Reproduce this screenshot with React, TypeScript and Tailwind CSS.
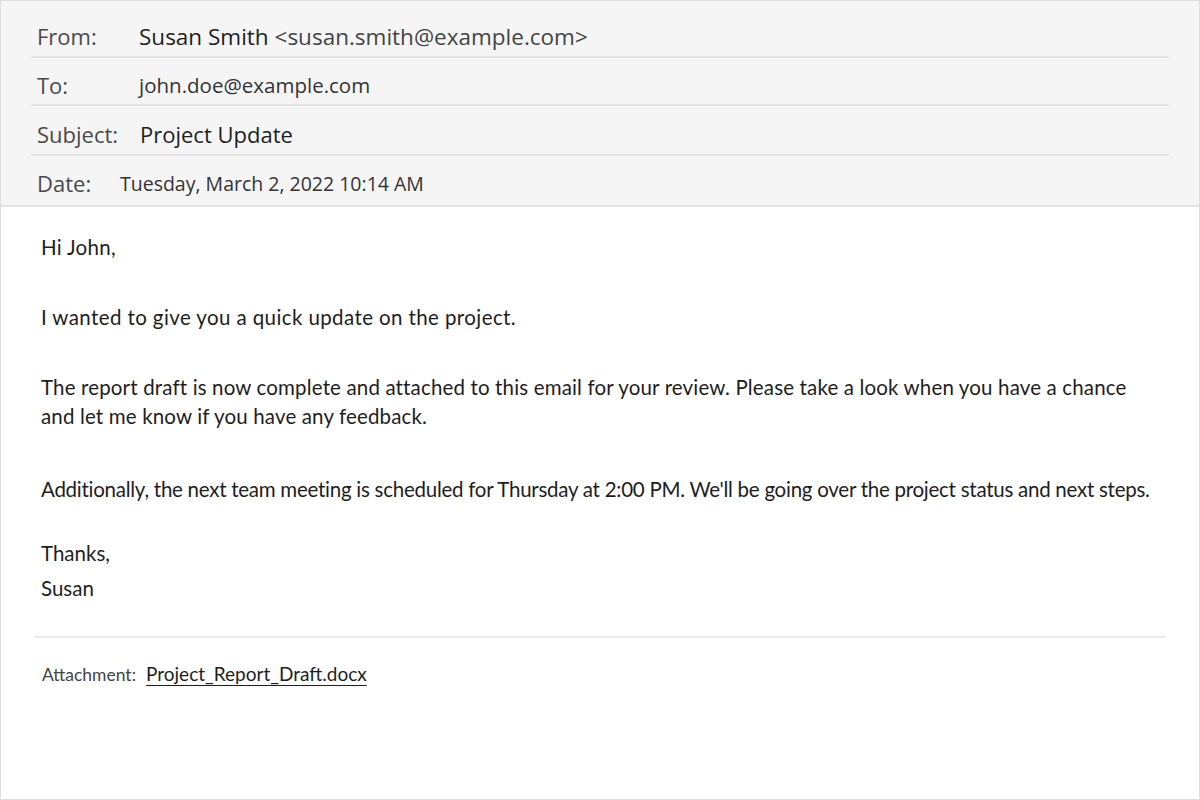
export default function App() {
  return (
    <div className="h-[800px] w-[1200px] overflow-hidden border border-[#dedede] bg-white font-['Open_Sans',sans-serif]">
      <div className="border-b-2 border-[#e2e2e2] bg-[#f5f5f5] pt-[8px]">
        <div className="mx-[30px] flex h-[49px] items-center border-b-2 border-[#e4e4e4] pt-[8px]">
          <span className="w-[108px] pl-[6px] text-[22px] text-[#4a4a4a]">From:</span>
          <span className="text-[22.5px] text-[#1f1f1f]">
            Susan Smith <span className="text-[#444]">&lt;susan.smith@example.com&gt;</span>
          </span>
        </div>
        <div className="mx-[30px] flex h-[48px] items-center border-b-2 border-[#e4e4e4] pt-[8px]">
          <span className="w-[108px] pl-[6px] text-[22px] text-[#4a4a4a]">To:</span>
          <span className="text-[20.5px] text-[#333]">john.doe@example.com</span>
        </div>
        <div className="mx-[30px] flex h-[50px] items-center border-b-2 border-[#e4e4e4] pt-[8px]">
          <span className="w-[109px] pl-[6px] text-[22px] text-[#4a4a4a]">Subject:</span>
          <span className="text-[22px] text-[#1f1f1f]">Project Update</span>
        </div>
        <div className="mx-[30px] flex h-[49px] items-center pt-[6px]">
          <span className="w-[89px] pl-[6px] text-[22px] text-[#4a4a4a]">Date:</span>
          <span className="text-[19.5px] text-[#333]">Tuesday, March 2, 2022 10:14 AM</span>
        </div>
      </div>

      <div className="px-[40px] pt-[26px] font-['Lato',sans-serif] text-[20.5px] leading-[29px] text-[#1e1e1e]">
        <p className="tracking-[0.3px]">Hi John,</p>
        <p className="mt-[41px] tracking-[0.4px]">I wanted to give you a quick update on the project.</p>
        <p className="mt-[41px] whitespace-nowrap tracking-[0.15px]">
          The report draft is now complete and attached to this email for your review. Please take a look when you have a chance
          <br />
          and let me know if you have any feedback.
        </p>
        <p className="mt-[44px] whitespace-nowrap tracking-[-0.26px]">
          Additionally, the next team meeting is scheduled for Thursday at 2:00 PM. We'll be going over the project status and next steps.
        </p>
        <p className="mt-[32px] leading-[35px]">
          Thanks,
          <br />
          Susan
        </p>
      </div>

      <div className="mx-[34px] mt-[30px] border-t-2 border-[#ececec]" />

      <div className="flex items-baseline gap-[10px] px-[41px] pt-[22px] font-['Lato',sans-serif]">
        <span className="text-[17.5px] text-[#444]">Attachment:</span>
        <span className="text-[19px] text-[#1e1e1e] underline underline-offset-[4px]">Project_Report_Draft.docx</span>
      </div>
    </div>
  );
}
